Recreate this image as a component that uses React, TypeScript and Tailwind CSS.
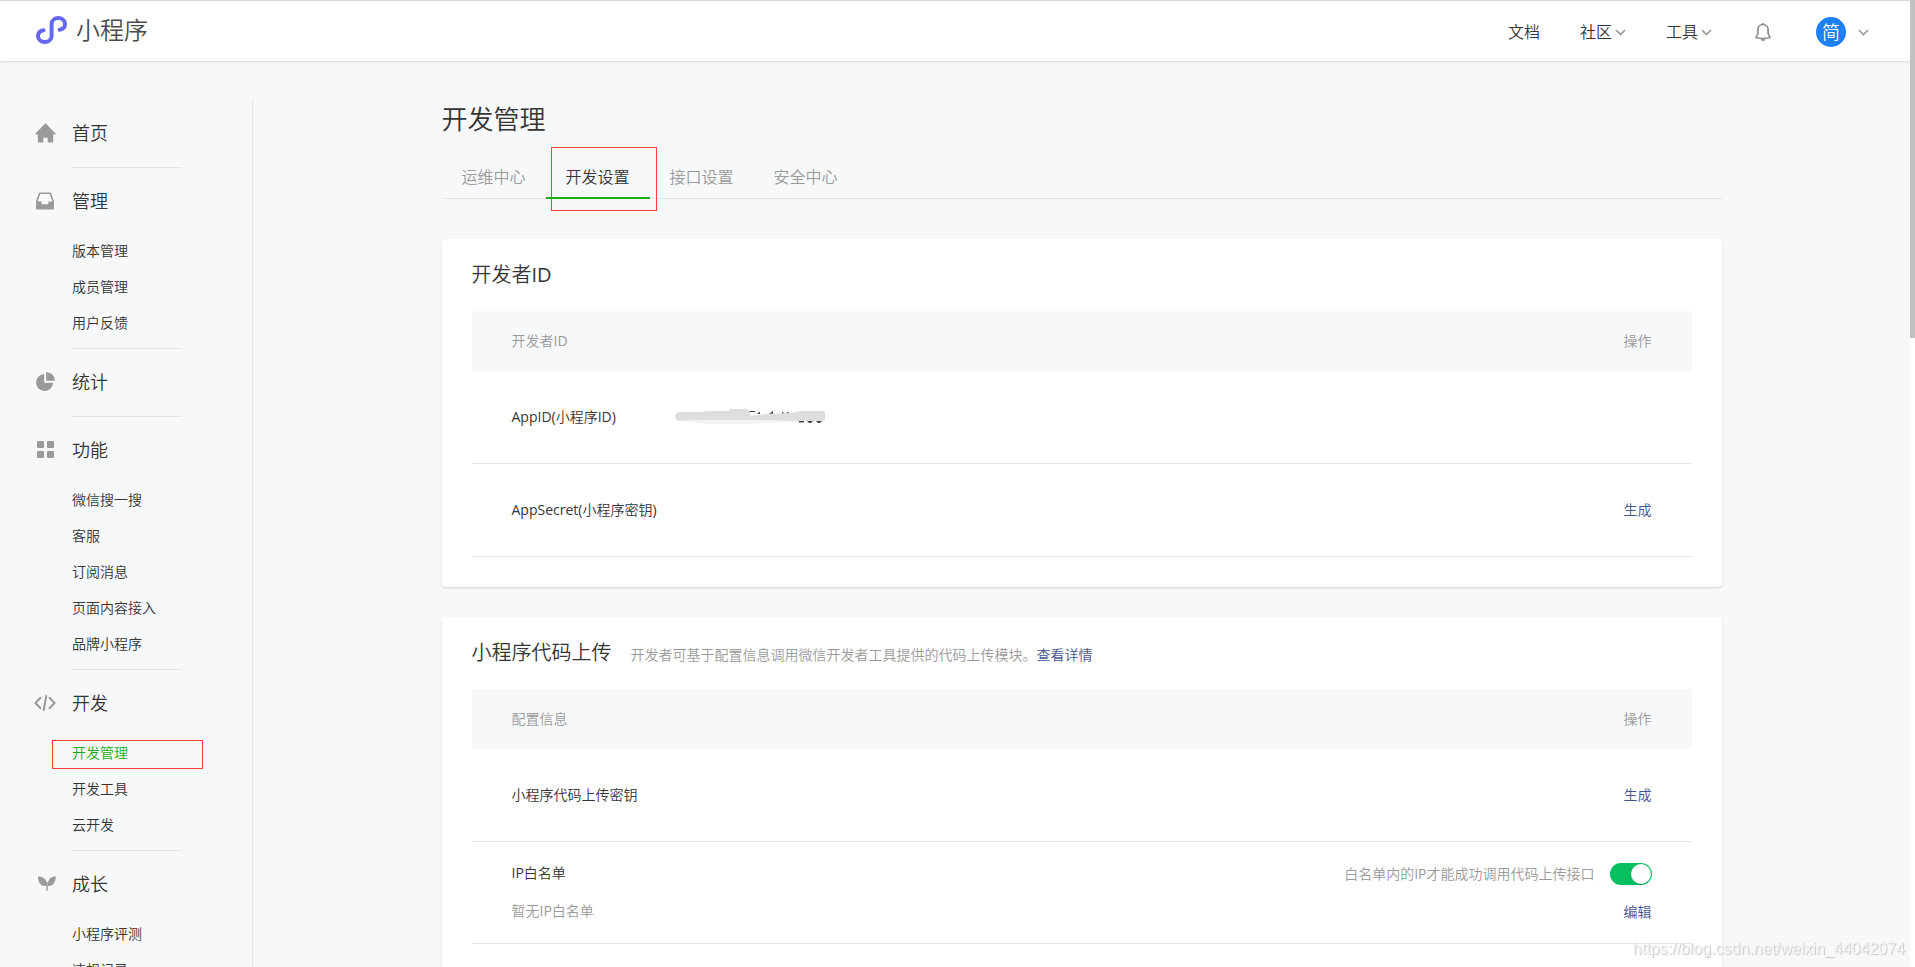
import React, { useState } from "react";

type NavGroup = {
  title: string;
  icon: React.ReactNode;
  items?: string[];
};

const groups: NavGroup[] = [
  {
    title: "首页",
    icon: (
      <svg className="h-5 w-[21px]" viewBox="0 0 21 20" fill="currentColor">
        <path d="M10.5 0.3 20.6 10.4a.6.6 0 0 1-.4 1H18.2V18.4a1.2 1.2 0 0 1-1.2 1.2H12.7V14.8H8.3V19.6H4a1.2 1.2 0 0 1-1.2-1.2V11.4H.8a.6.6 0 0 1-.4-1Z" />
      </svg>
    ),
  },
  {
    title: "管理",
    icon: (
      <svg className="h-[18px] w-[18px]" viewBox="0 0 18 18" fill="currentColor">
        <path fillRule="evenodd" d="M3.8.5H14.2a1 1 0 0 1 1 .7L18 9.3V16.4a1 1 0 0 1-1 1H1a1 1 0 0 1-1-1V9.3L2.8 1.2a1 1 0 0 1 1-.7ZM4.2 2 1.7 9.5H5.6V11.4a.8.8 0 0 0 .8.8H11.6a.8.8 0 0 0 .8-.8V9.5H16.3L13.8 2Z" />
      </svg>
    ),
    items: ["版本管理", "成员管理", "用户反馈"],
  },
  {
    title: "统计",
    icon: (
      <svg className="h-[19px] w-[19px]" viewBox="0 0 19 19" fill="currentColor">
        <path d="M8.2 2V10.8H17A8.5 8.5 0 1 1 8.2 2Z" />
        <path d="M10.2 0A8.9 8.9 0 0 1 19 8.8H10.2Z" />
      </svg>
    ),
  },
  {
    title: "功能",
    icon: (
      <svg className="h-[17px] w-[17px]" viewBox="0 0 17 17" fill="currentColor">
        <rect width="7" height="7" rx="1" />
        <rect x="10" width="7" height="7" rx="1" />
        <rect y="10" width="7" height="7" rx="1" />
        <rect x="10" y="10" width="7" height="7" rx="1" />
      </svg>
    ),
    items: ["微信搜一搜", "客服", "订阅消息", "页面内容接入", "品牌小程序"],
  },
  {
    title: "开发",
    icon: (
      <svg className="h-4 w-[22px]" viewBox="0 0 22 16" fill="none" stroke="currentColor" strokeWidth="2">
        <path d="M7 2.2 1.4 8 7 13.8M15 2.2 20.6 8 15 13.8M12.4.2 9.6 15.8" />
      </svg>
    ),
    items: ["开发管理", "开发工具", "云开发"],
  },
  {
    title: "成长",
    icon: (
      <svg className="ml-1 h-[15px] w-[19px]" viewBox="0 0 19 15" fill="currentColor">
        <path d="M0 0C5 0 9 2.6 9.3 7.6V10.2H8C3 10 0 6.500 0 0Z" />
        <path d="M18.700 0C14 0 10.800 2.800 10.600 7V10.200C15.500 10 18.700 6.500 18.700 0Z" />
        <path d="M8.700 6H10.300V15H8.700Z" />
      </svg>
    ),
    items: ["小程序评测", "违规记录"],
  },
];

const tabs = ["运维中心", "开发设置", "接口设置", "安全中心"];

function Chevron() {
  return (
    <svg className="h-[7px] w-[11px] text-[#9a9a9a]" viewBox="0 0 11 7" fill="none" stroke="currentColor" strokeWidth="1.7">
      <path d="M1 1 5.500 5.500 10 1" />
    </svg>
  );
}

function Header() {
  return (
    <header className="flex h-[62px] shrink-0 items-center justify-between border-t border-b border-t-[#d8d9dd] border-b-[#e0e1e4] bg-white pr-[41px] pl-9 shadow-[0_1px_2px_rgba(0,0,0,0.05)]">
      <a href="#" className="flex items-center gap-[9px] pb-0.5 text-2xl text-[#4c4c4c]">
        <svg className="h-7 w-[31px]" viewBox="0 0 31 28" fill="none" stroke="#6467ef" strokeWidth="4" strokeLinecap="round">
          <path d="M7.500 14.200C4.300 14.800 2 17 2 20C2 23.400 5 26 8.800 26S15.600 23.400 15.600 20V8C15.600 4.600 18.600 2 22.300 2S29 4.600 29 8C29 11 26.800 13.200 23.700 13.800" />
        </svg>
        小程序
      </a>

      <nav className="flex items-center pt-0.5 text-base">
        <a href="#" className="mr-10">文档</a>
        <button className="mr-10 flex items-center gap-[3px]">
          社区
          <Chevron />
        </button>
        <button className="mr-[43px] flex items-center gap-[3px]">
          工具
          <Chevron />
        </button>
        <button className="mr-[45px]" aria-label="通知">
          <svg className="h-[18px] w-4" viewBox="0 0 16 18" fill="none" stroke="#8f8f8f" strokeWidth="1.700" strokeLinejoin="round">
            <path d="M8 1.500C4.800 1.500 2.900 4 2.900 7V10.500L1 14.500C3 15.300 5.500 15.600 8 15.600S13 15.300 15 14.500L13.100 10.500V7C13.100 4 11.200 1.500 8 1.500Z" />
            <path d="M8 0V1.500M6.300 16.500Q8 17.600 9.700 16.500" />
          </svg>
        </button>
        <button className="flex items-center gap-3" aria-label="账号">
          <span className="flex h-[30px] w-[30px] items-center justify-center rounded-full bg-[#1e80f5] text-lg font-medium text-white">简</span>
          <Chevron />
        </button>
      </nav>
    </header>
  );
}

function Sidebar() {
  return (
    <aside className="w-[253px] shrink-0 border-r border-[#e4e5e8]">
      {groups.map((group) => (
        <section key={group.title}>
          <a href="#" className="flex h-[65px] items-center text-lg">
            <span className="ml-[34px] flex w-[22px] justify-center text-[#9a9a9a]">{group.icon}</span>
            <span className="ml-4">{group.title}</span>
          </a>
          {group.items && (
            <ul className="pb-[5px] text-sm">
              {group.items.map((item) =>
                item === "开发管理" ? (
                  <li key={item} className="relative flex h-9 items-center pl-[72px]">
                    <a href="#" className="text-[#1aad19]">{item}</a>
                    <span className="pointer-events-none absolute top-[5px] left-[52px] h-[29px] w-[151px] border border-[#f9423a]" />
                  </li>
                ) : (
                  <li key={item} className="flex h-9 items-center pl-[72px]">
                    <a href="#">{item}</a>
                  </li>
                )
              )}
            </ul>
          )}
          <hr className="mt-0.5 ml-[72px] w-[110px] border-[#e4e5e8]" />
        </section>
      ))}
    </aside>
  );
}

function Tabs() {
  const [active, setActive] = useState("开发设置");

  return (
    <div className="relative mt-[18px] flex h-[42px] border-b border-[#e4e5e8] text-base">
      {tabs.map((tab) => (
        <button
          key={tab}
          onClick={() => setActive(tab)}
          className={
            tab === active
              ? "-mb-px border-b-2 border-[#1aad19] px-5"
              : "-mb-px border-b-2 border-transparent px-5 text-[#9a9a9a]"
          }
        >
          {tab}
        </button>
      ))}
      <span className="pointer-events-none absolute -top-[10px] left-[109px] h-16 w-[106px] border border-[#f9423a]" />
    </div>
  );
}

function DeveloperId() {
  return (
    <section className="mt-10 rounded bg-white px-[30px] pb-[30px] shadow-[0_1px_2px_rgba(0,0,0,0.15)]">
      <h2 className="flex h-[72px] items-center text-xl">开发者ID</h2>
      <table className="w-full border-separate border-spacing-0 text-left text-sm">
        <thead className="bg-[#f7f8fa] text-[#9a9a9a]">
          <tr className="h-[60px]">
            <th colSpan={2} className="pl-10 font-normal">开发者ID</th>
            <th className="pr-10 text-right font-normal">操作</th>
          </tr>
        </thead>
        <tbody>
          <tr className="h-[93px]">
            <td className="w-[203px] border-b border-[#e4e5e8] pl-10">AppID(小程序ID)</td>
            <td className="border-b border-[#e4e5e8]">
              {/* masked id */}
              <svg className="h-4 w-[151px]" viewBox="0 0 151 16" aria-label="已隐藏">
                <path d="M74 3H80V2H74ZM82 5 85 2.500V5ZM94 5 98 2V5ZM107 3V5H108.500V3ZM112 3V5H113.500V3ZM124 12H129V13.500H124ZM132 12H138L136 14H134ZM141 12H147L145 14H143Z" fill="#444" />
                <path d="M3 12 15 13 30 15H75L90 14 120 13V9L76 6Z" fill="#f3f3f3" />
                <path d="M3 3H30V2H54V0H72L75 3V11H15L3 12 0 9V6Z" fill="#dedede" />
                <path d="M75 7 90 5 115 4 126 2H150V12H122L90 11H75Z" fill="#dedede" />
              </svg>
            </td>
            <td className="border-b border-[#e4e5e8]" />
          </tr>
          <tr className="h-[93px]">
            <td colSpan={2} className="border-b border-[#e4e5e8] pl-10">AppSecret(小程序密钥)</td>
            <td className="border-b border-[#e4e5e8] pr-10 text-right">
              <button className="text-[#44548e]">生成</button>
            </td>
          </tr>
        </tbody>
      </table>
    </section>
  );
}

function CodeUpload() {
  const [whitelist, setWhitelist] = useState(true);

  return (
    <section className="mt-[30px] rounded bg-white px-[30px] pb-[30px] shadow-[0_1px_2px_rgba(0,0,0,0.15)]">
      <div className="flex h-[72px] items-center">
        <div className="flex items-baseline gap-[19px]">
          <h2 className="text-xl">小程序代码上传</h2>
          <p className="text-sm text-[#9a9a9a]">
            开发者可基于配置信息调用微信开发者工具提供的代码上传模块。
            <a href="#" className="text-[#44548e]">查看详情</a>
          </p>
        </div>
      </div>
      <table className="w-full border-separate border-spacing-0 text-left text-sm">
        <thead className="bg-[#f7f8fa] text-[#9a9a9a]">
          <tr className="h-[60px]">
            <th className="pl-10 font-normal">配置信息</th>
            <th className="pr-10 text-right font-normal">操作</th>
          </tr>
        </thead>
        <tbody>
          <tr className="h-[93px]">
            <td className="border-b border-[#e4e5e8] pl-10">小程序代码上传密钥</td>
            <td className="border-b border-[#e4e5e8] pr-10 text-right">
              <button className="text-[#44548e]">生成</button>
            </td>
          </tr>
          <tr className="h-[102px]">
            <td className="border-b border-[#e4e5e8] pb-0.5 pl-10">
              <p>IP白名单</p>
              <p className="mt-[18px] text-[#9a9a9a]">暂无IP白名单</p>
            </td>
            <td className="border-b border-[#e4e5e8] pr-10">
              <div className="flex h-5 items-center justify-end gap-[15px]">
                <label htmlFor="whitelist" className="text-[#9a9a9a]">白名单内的IP才能成功调用代码上传接口</label>
                <input
                  id="whitelist"
                  type="checkbox"
                  checked={whitelist}
                  onChange={(e) => setWhitelist(e.target.checked)}
                  className="h-[22px] w-[42px] appearance-none rounded-full bg-gray-300 p-px before:block before:h-5 before:w-5 before:rounded-full before:bg-white before:shadow checked:bg-[#07c160] checked:before:ml-5"
                />
              </div>
              <div className="mt-[18px] text-right">
                <button className="text-[#44548e]">编辑</button>
              </div>
            </td>
          </tr>
        </tbody>
      </table>
    </section>
  );
}

function App() {
  return (
    <div className="flex h-screen overflow-hidden bg-[#f7f8fa] font-['Open_Sans','Noto_Sans_CJK_SC_DemiLight','Noto_Sans_CJK_SC',sans-serif] font-normal text-[#353535]">
      <div className="flex min-w-0 flex-1 flex-col">
        <Header />
        <div className="flex min-h-0 flex-1 overflow-hidden pt-[38px]">
          <Sidebar />
          <main className="min-w-0 flex-1">
            <div className="mx-auto max-w-[1280px]">
              <h1 className="text-[26px] leading-[39px]">开发管理</h1>
              <Tabs />
              <DeveloperId />
              <CodeUpload />
            </div>
          </main>
        </div>
      </div>

      {/* Scrollbar */}
      <div className="w-[5px] shrink-0 bg-white">
        <div className="h-[35%] bg-[#c1c1c1]" />
      </div>

      <p className="pointer-events-none fixed right-2.5 bottom-1.5 font-['Liberation_Sans',sans-serif] text-base font-normal text-[#f4f4f5] [text-shadow:1px_1px_1px_#c4c5c8]">
        https://blog.csdn.net/weixin_44042074
      </p>
    </div>
  );
}

export default App;
